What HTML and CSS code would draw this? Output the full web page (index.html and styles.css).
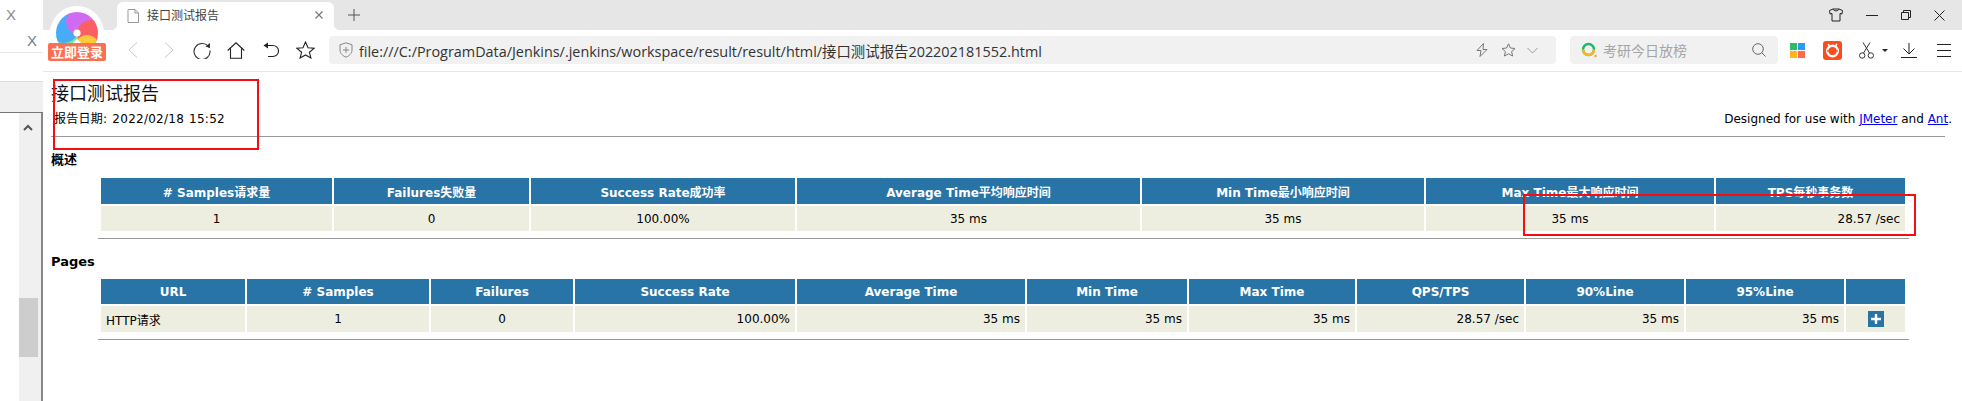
FILE: index.html
```html
<!DOCTYPE html>
<html lang="zh">
<head>
<meta charset="utf-8">
<title>接口测试报告</title>
<link rel="stylesheet" href="styles.css">
</head>
<body>
<div class="app">
  <aside class="side">
    <div class="side-top"><span class="side-x1">X</span></div>
    <div class="side-second"><span class="side-x2">X</span></div>
    <div class="side-blank"></div>
    <div class="side-band"></div>
    <div class="side-body">
      <div class="scrollbar">
        <svg class="scroll-up" width="12" height="8" viewBox="0 0 12 8"><path d="M2 6 L6 2 L10 6" fill="none" stroke="#555" stroke-width="2"/></svg>
        <div class="thumb"></div>
      </div>
    </div>
  </aside>
  <div class="browser">
    <div class="tabstrip">
      <div class="tab">
        <svg class="tab-file" width="12" height="14" viewBox="0 0 12 14"><path d="M1 .5 H8 L11.5 4 V13.5 H1 Z M8 .5 V4 H11.5" fill="#fff" stroke="#999"/></svg>
        <span class="tab-title">接口测试报告</span>
        <svg class="tab-close" width="10" height="10" viewBox="0 0 10 10"><path d="M1.5 1.5 L8.5 8.5 M8.5 1.5 L1.5 8.5" stroke="#777" stroke-width="1.2"/></svg>
      </div>
      <svg class="new-tab" width="12" height="12" viewBox="0 0 12 12"><path d="M6 0 V12 M0 6 H12" stroke="#555" stroke-width="1"/></svg>
      <div class="win-ctrls">
        <svg width="14" height="14" viewBox="0 0 14 14"><path d="M4 1 H10 L13.5 2.5 L13 6 L11 5.5 V13 H3 V5.5 L1 6 L.5 2.5 Z M4 1 C5 3.5 9 3.5 10 1" fill="none" stroke="#222"/></svg>
        <svg width="12" height="12" viewBox="0 0 12 12"><path d="M0 6.5 H12" stroke="#222"/></svg>
        <svg width="10" height="10" viewBox="0 0 10 10"><path d="M.5 2.5 H7.5 V9.5 H.5 Z M2.5 2.5 V.5 H9.5 V7.5 H7.5" fill="none" stroke="#222"/></svg>
        <svg width="11" height="11" viewBox="0 0 11 11"><path d="M.5 .5 L10.5 10.5 M10.5 .5 L.5 10.5" stroke="#222"/></svg>
      </div>
    </div>
    <div class="toolbar">
      <nav class="nav">
        <svg width="10" height="16" viewBox="0 0 10 16"><path d="M9 .5 L1 8 L9 15.5" fill="none" stroke="#c6c6c6"/></svg>
        <svg class="nav-fwd" width="10" height="16" viewBox="0 0 10 16"><path d="M1 .5 L9 8 L1 15.5" fill="none" stroke="#c6c6c6"/></svg>
        <svg class="nav-reload" width="18" height="18" viewBox="0 0 18 18"><path d="M16 6.5 A8 8 0 1 0 17 9.5" fill="none" stroke="#333" stroke-width="1.1"/><path d="M12.5 5.5 L17 7 L17 2 Z" fill="#333"/></svg>
        <svg class="nav-home" width="18" height="17" viewBox="0 0 18 17"><path d="M.7 8.5 L9 .8 L17.3 8.5 M3.5 6.5 V16.3 H14.5 V6.5" fill="none" stroke="#222" stroke-width="1.1"/></svg>
        <svg class="nav-undo" width="16" height="16" viewBox="0 0 16 16"><path d="M4 3.5 H10 A5.5 5.5 0 0 1 10 14.5 H5" fill="none" stroke="#222" stroke-width="1.1"/><path d="M0.5 3.5 L5 .5 V6.5 Z" fill="#222"/></svg>
        <svg class="nav-star" width="19" height="18" viewBox="0 0 19 18"><path d="M9.5 1 L12 6.7 L18 7.3 L13.4 11.3 L14.9 17 L9.5 14 L4.1 17 L5.6 11.3 L1 7.3 L7 6.7 Z" fill="none" stroke="#222" stroke-width="1.1"/></svg>
      </nav>
      <div class="address">
        <svg class="shield" width="14" height="16" viewBox="0 0 14 16"><path d="M7 .8 L13 2.8 V8 C13 11.5 10 14 7 15.2 C4 14 1 11.5 1 8 V2.8 Z M7 5 V11 M4 8 H10" fill="none" stroke="#888"/></svg>
        <span class="url">file:///C:/ProgramData/Jenkins/.jenkins/workspace/result/result/html/接口测试报告202202181552.html</span>
        <svg class="addr-bolt" width="12" height="14" viewBox="0 0 12 14"><path d="M7.5 .5 L1 7.5 H5 L4 13.5 L11 6.5 H7 Z" fill="none" stroke="#777"/></svg>
        <svg class="addr-star" width="15" height="14" viewBox="0 0 15 14"><path d="M7.5 .8 L9.4 5 L14 5.5 L10.6 8.6 L11.6 13 L7.5 10.8 L3.4 13 L4.4 8.6 L1 5.5 L5.6 5 Z" fill="none" stroke="#777"/></svg>
        <svg class="addr-chev" width="11" height="7" viewBox="0 0 11 7"><path d="M.5 1 L5.5 6 L10.5 1" fill="none" stroke="#999"/></svg>
      </div>
      <div class="search">
        <svg class="search-logo" width="16" height="16" viewBox="0 0 16 16"><circle cx="7.5" cy="7.5" r="5.5" fill="none" stroke="#1db86a" stroke-width="2.4"/><path d="M2 7.5 A5.5 5.5 0 0 0 13 7.5" fill="none" stroke="#fbb71c" stroke-width="2.4"/><circle cx="14.5" cy="14" r="1.2" fill="#f5a623"/></svg>
        <span class="search-text">考研今日放榜</span>
        <svg class="search-glass" width="14" height="14" viewBox="0 0 14 14"><circle cx="6" cy="6" r="5.3" fill="none" stroke="#666"/><path d="M9.8 9.8 L13.5 13.5" stroke="#666"/></svg>
      </div>
      <div class="tools">
        <div class="tile-grid"><i class="tg"></i><i class="tb"></i><i class="ty"></i><i class="tr"></i></div>
        <svg class="tool-orange" width="19" height="19" viewBox="0 0 19 19"><rect width="19" height="19" rx="3" fill="#fb4d1e"/><circle cx="9.5" cy="10" r="5.3" fill="none" stroke="#fff" stroke-width="2.4"/><path d="M4 10 H15" stroke="#fb4d1e" stroke-width="1.4"/><path d="M5 3 L7 5.5 M14 3 L12 5.5" stroke="#fff" stroke-width="1.4"/></svg>
        <svg class="tool-scissors" width="15" height="17" viewBox="0 0 15 17"><circle cx="3.2" cy="13.5" r="2.7" fill="none" stroke="#333"/><circle cx="11.8" cy="13.5" r="2.7" fill="none" stroke="#333"/><path d="M4.5 11 L11 .5 M10.5 11 L4 .5" stroke="#333"/></svg>
        <span class="caret"></span>
        <svg class="tool-down" width="16" height="15" viewBox="0 0 16 15"><path d="M8 0 V11 M2.5 5.5 L8 11 L13.5 5.5 M0 14.5 H16" fill="none" stroke="#222"/></svg>
        <svg class="tool-menu" width="14" height="13" viewBox="0 0 14 13"><path d="M0 .5 H14 M0 6.5 H14 M0 12.5 H14" stroke="#222"/></svg>
      </div>
    </div>
    <main class="page">
      <h1 class="report-title">接口测试报告</h1>
      <div class="meta">
        <span class="meta-date">报告日期: 2022/02/18 15:52</span>
        <span class="meta-note">Designed for use with <a href="#">JMeter</a> and <a href="#">Ant</a>.</span>
      </div>
      <hr class="rule rule-top">
      <h2 class="section first">概述</h2>
      <table class="grid summary">
        <colgroup><col class="s1"><col class="s2"><col class="s3"><col class="s4"><col class="s5"><col class="s6"><col class="s7"></colgroup>
        <thead><tr><th># Samples请求量</th><th>Failures失败量</th><th>Success Rate成功率</th><th>Average Time平均响应时间</th><th>Min Time最小响应时间</th><th>Max Time最大响应时间</th><th>TPS每秒事务数</th></tr></thead>
        <tbody><tr><td class="c">1</td><td class="c">0</td><td class="c">100.00%</td><td class="c">35 ms</td><td class="c">35 ms</td><td class="c">35 ms</td><td class="r">28.57 /sec</td></tr></tbody>
      </table>
      <hr class="rule rule-table">
      <h2 class="section second">Pages</h2>
      <table class="grid pages">
        <colgroup><col class="p1"><col class="p2"><col class="p3"><col class="p4"><col class="p5"><col class="p6"><col class="p7"><col class="p8"><col class="p9"><col class="p10"><col class="p11"></colgroup>
        <thead><tr><th>URL</th><th># Samples</th><th>Failures</th><th>Success Rate</th><th>Average Time</th><th>Min Time</th><th>Max Time</th><th>QPS/TPS</th><th>90%Line</th><th>95%Line</th><th></th></tr></thead>
        <tbody><tr><td class="l">HTTP请求</td><td class="c">1</td><td class="c">0</td><td class="r">100.00%</td><td class="r">35 ms</td><td class="r">35 ms</td><td class="r">35 ms</td><td class="r">28.57 /sec</td><td class="r">35 ms</td><td class="r">35 ms</td><td class="c"><span class="plus"><svg width="10" height="10" viewBox="0 0 10 10"><path d="M5 0 V10 M0 5 H10" stroke="#fff" stroke-width="2.4"/></svg></span></td></tr></tbody>
      </table>
      <hr class="rule rule-table">
    </main>
  </div>
</div>

<div class="logo">
  <svg width="54" height="42" viewBox="0 0 54 42">
    <defs><clipPath id="disc"><circle cx="27" cy="27" r="21"/></clipPath></defs>
    <circle cx="27" cy="27" r="27" fill="#fff"/>
    <g clip-path="url(#disc)">
      <circle cx="16" cy="40" r="14" fill="#86e58f"/>
      <circle cx="14" cy="22" r="15" fill="#47acf8"/>
      <circle cx="31" cy="15" r="15" fill="#cf6bf0"/>
      <circle cx="41" cy="28" r="14" fill="#fb5f64"/>
      <circle cx="37" cy="41" r="12" fill="#ffc93a"/>
    </g>
    <circle cx="27" cy="27" r="3.6" fill="#fff"/>
  </svg>
  <span class="logo-badge">立即登录</span>
</div>
<div class="mark mark-title"></div>
<div class="mark mark-tps"></div>
</body>
</html>
```
FILE: styles.css
```css
* { box-sizing: border-box; }
html, body { margin: 0; padding: 0; height: 100%; background: #fff; overflow: hidden; }
body { position: relative; font: 12px "DejaVu Sans", "Noto Sans CJK SC", sans-serif; color: #000; }
.app { display: flex; width: 1962px; height: 401px; }

/* left window sliver */
.side { width: 43px; flex: none; display: flex; flex-direction: column; font-family: "Liberation Sans", sans-serif; color: #8a8a8a; }
.side-top { height: 28px; display: flex; align-items: center; padding-left: 6px; font-size: 15px; }
.side-second { height: 25px; display: flex; align-items: center; justify-content: flex-end; padding-right: 6px; font-size: 15px; color: #6f7f8f; border-bottom: 1px solid #e8e8e8; }
.side-blank { height: 29px; border-bottom: 1px solid #ddd; }
.side-band { height: 31px; background: #f0f0f0; border-bottom: 1px solid #777; }
.side-body { flex: 1; display: flex; justify-content: flex-end; }
.scrollbar { width: 24px; background: #f0f0f0; border-right: 2px solid #888; padding-top: 11px; display: flex; flex-direction: column; }
.scroll-up { margin-left: 3px; }
.thumb { width: 19px; height: 59px; margin-top: 166px; background: #cdcdcd; }

/* browser */
.browser { flex: 1; min-width: 0; display: flex; flex-direction: column; }
.tabstrip { height: 30px; background: #e6e6e6; display: flex; align-items: flex-end; padding-left: 74px; }
.tab { position: relative; width: 217px; height: 28px; background: #fff; border-radius: 6px 6px 0 0; display: flex; align-items: center; padding-left: 10px; }
.tab::before, .tab::after { content: ""; position: absolute; bottom: 0; width: 6px; height: 6px; }
.tab::before { left: -6px; background: radial-gradient(circle at 0 0, #e6e6e6 6px, #fff 6.5px); }
.tab::after { right: -6px; background: radial-gradient(circle at 100% 0, #e6e6e6 6px, #fff 6.5px); }
.tab-file { margin-right: 8px; margin-top: -1px; }
.tab-title { font: 12px "Noto Sans CJK SC", sans-serif; color: #444; flex: 1; margin-top: -3px; }
.tab-close { margin-right: 10px; margin-top: -2px; }
.new-tab { align-self: center; margin-left: 14px; }
.win-ctrls { margin-left: auto; align-self: center; display: flex; align-items: center; gap: 23px; padding-right: 17px; }

.toolbar { height: 42px; border-bottom: 1px solid #e6e6e6; display: flex; align-items: center; padding-left: 85px; padding-bottom: 1px; }
.nav { display: flex; align-items: center; width: 201px; flex: none; }
.nav-fwd { margin-left: 26px; }
.nav-reload { margin-left: 19px; }
.nav-home { margin-left: 16px; }
.nav-undo { margin-left: 18px; }
.nav-star { margin-left: 17px; }
.address { width: 1227px; flex: none; height: 28px; background: #f1f1f1; border-radius: 4px; display: flex; align-items: center; padding-left: 10px; }
.shield { flex: none; }
.url { margin-left: 6px; flex: 1; font: 14.4px "Open Sans", "Noto Sans CJK SC", sans-serif; color: #333; white-space: nowrap; }
.addr-bolt { margin-right: 13px; }
.addr-star { margin-right: 11px; }
.addr-chev { margin-right: 18px; }
.search { width: 208px; flex: none; margin-left: 14px; height: 28px; background: #f1f1f1; border-radius: 4px; display: flex; align-items: center; padding-left: 11px; }
.search-text { margin-left: 6px; flex: 1; font: 14px "Noto Sans CJK SC", sans-serif; color: #a5a5a5; }
.search-glass { margin-right: 12px; }
.tools { display: flex; align-items: center; margin-left: 12px; }
.tile-grid { display: grid; grid-template-columns: 7px 7px; grid-auto-rows: 7px; gap: 1px; width: 15px; }
.tile-grid i { display: block; }
.tg { background: #2dbb65; }
.tb { background: #2a9cf7; }
.ty { background: #ffb51e; }
.tr { background: #ff6a4b; }
.tool-orange { margin-left: 18px; }
.tool-scissors { margin-left: 17px; }
.caret { width: 0; height: 0; border-left: 3px solid transparent; border-right: 3px solid transparent; border-top: 3px solid #222; margin-left: 8px; }
.tool-down { margin-left: 13px; }
.tool-menu { margin-left: 20px; }

/* report */
.page { flex: 1; padding-left: 8px; padding-top: 3px; position: relative; }
.report-title { margin: 0; height: 34px; font: 400 18px/34px "Noto Sans CJK SC", sans-serif; color: #111; }
.meta { height: 21px; line-height: 20px; display: flex; justify-content: space-between; padding-right: 10px; }
.meta-date { padding-left: 3px; letter-spacing: .25px; word-spacing: 1px; }
.meta a { color: #00e; }
.rule { border: 0; height: 1px; background: #999; margin: 0; }
.rule-top { margin-top: 6px; width: 1894px; }
.section { margin: 0; font: 700 13px/16px "DejaVu Sans", "Noto Sans CJK SC", sans-serif; }
.first { margin-top: 15px; }
.second { margin-top: 15px; }
.grid { width: 1808px; table-layout: fixed; border-collapse: separate; border-spacing: 2px; margin-left: 48px; }
.summary { margin-top: 8px; }
.pages { margin-top: 7px; }
.grid th { background: #2874a6; color: #fff; font-weight: 700; text-align: center; padding: 0; white-space: nowrap; }
.grid td { background: #eeeee0; padding: 0 5px; white-space: nowrap; }
.summary th { height: 26px; }
.summary td { height: 25px; }
.pages th { height: 25px; }
.pages td { height: 26px; }
td.c { text-align: center; }
td.r { text-align: right; }
td.l { text-align: left; }
.rule-table { margin-top: 5px; margin-left: 47px; width: 1811px; }
.plus { display: inline-flex; width: 16px; height: 16px; background: #2874a6; align-items: center; justify-content: center; vertical-align: middle; }

.s1 { width: 231px; } .s2 { width: 195px; } .s3 { width: 264px; } .s4 { width: 343px; } .s5 { width: 282px; } .s6 { width: 288px; } .s7 { width: 189px; }
.p1 { width: 144px; } .p2 { width: 182px; } .p3 { width: 142px; } .p4 { width: 220px; } .p5 { width: 228px; } .p6 { width: 160px; } .p7 { width: 166px; } .p8 { width: 167px; } .p9 { width: 158px; } .p10 { width: 158px; } .p11 { width: 59px; }

/* overlays */
.logo { position: absolute; left: 50px; top: 6px; width: 54px; height: 56px; }
.logo svg { display: block; }
.logo-badge { position: absolute; left: -2px; top: 37px; width: 58px; height: 18px; background: #fb7052; border-radius: 2px; color: #fff; font: 700 13px/18px "Noto Sans CJK SC", sans-serif; text-align: center; }
.logo-badge::before { content: ""; position: absolute; left: 25px; top: -4px; border-left: 4px solid transparent; border-right: 4px solid transparent; border-bottom: 4px solid #fff; }
.mark { position: absolute; border: 2px solid #f50d12; }
.mark-title { left: 53px; top: 79px; width: 206px; height: 71px; }
.mark-tps { left: 1523px; top: 194px; width: 393px; height: 42px; }
```
